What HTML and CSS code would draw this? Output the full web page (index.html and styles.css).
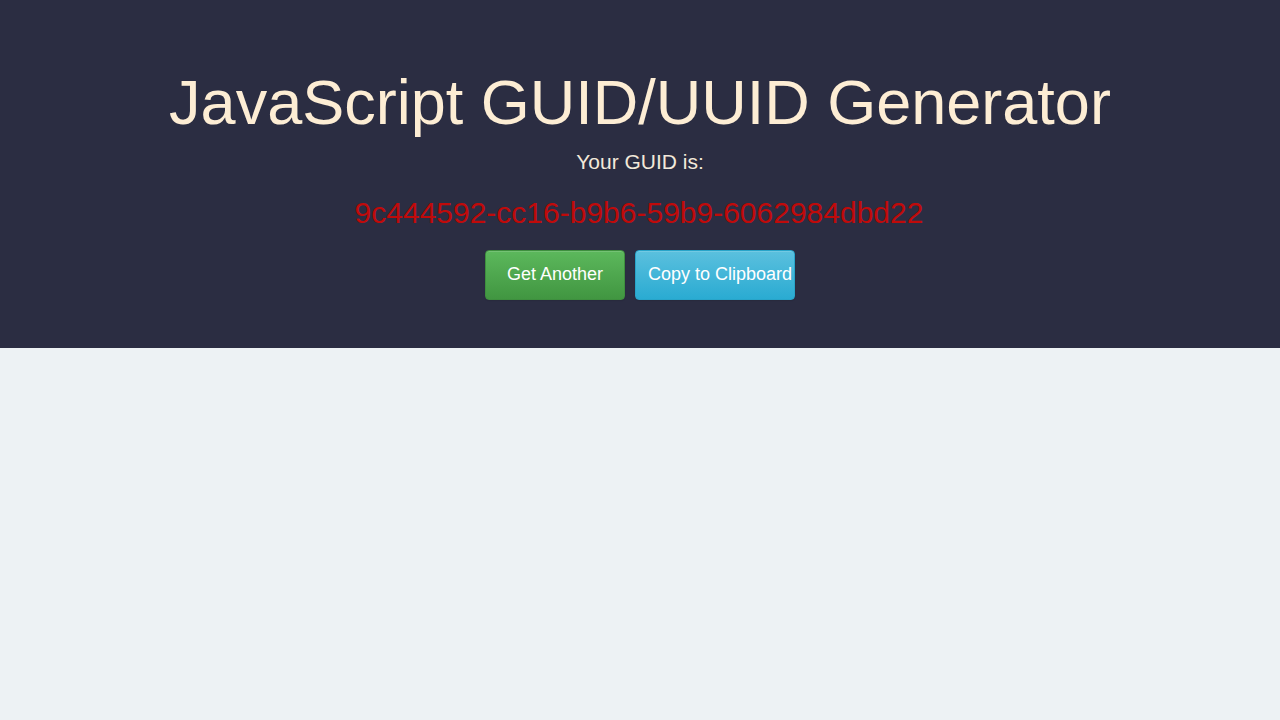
FILE: index.html
```html
<!DOCTYPE html>
<html lang="en">
<head>
    <meta charset="UTF-8">
    <meta name="viewport" content="width=device-width, initial-scale=1.0">
    <title>JavaScript GUID/UUID Generator</title>
    <link rel="stylesheet" href="styles.css">
</head>
<body>
    <div class="jumbotron">
        <h1 class="title">JavaScript GUID/UUID Generator</h1>
        <p class="lead">Your GUID is:</p>
        <h2 id="guid" class="guid">9c444592-cc16-b9b6-59b9-6062984dbd22</h2>
        <div class="actions">
            <button class="btn btn-success">Get Another</button>
            <button class="btn btn-info">Copy to Clipboard</button>
        </div>
    </div>
</body>
</html>
```

FILE: styles.css
```css
:root {
    --dark: #2b2d42;
    --light: #edf2f4;
    --cream: #fdedd4;
    --red: #c00a0a;
}

* {
    box-sizing: border-box;
}

body {
    margin: 0;
    font-family: "Liberation Sans", Arial, sans-serif;
    background: var(--light);
}

.jumbotron {
    background: var(--dark);
    padding: 48px 0;
    text-align: center;
}

.title {
    margin: 20px 0 10px;
    font-size: 63px;
    font-weight: 400;
    line-height: 1.1;
    color: var(--cream);
}

.lead {
    margin: 0 0 19px;
    font-size: 21px;
    line-height: 30px;
    color: #f3e9da;
}

.guid {
    margin: 0 0 21px;
    font-size: 30px;
    font-weight: 400;
    line-height: 33px;
    color: var(--red);
    transform: translateX(-1px);
}

.actions {
    display: flex;
    justify-content: center;
    gap: 10px;
}

.btn {
    height: 50px;
    padding: 0 0 2px;
    border-radius: 4px;
    font-family: inherit;
    font-size: 18px;
    color: #fff;
    cursor: pointer;
    white-space: nowrap;
    overflow: hidden;
    box-shadow: inset 0 1px 0 rgba(255, 255, 255, 0.15), 0 1px 1px rgba(0, 0, 0, 0.075);
}

.btn-success {
    width: 140px;
    background: linear-gradient(to bottom, #5cb85c, #419641);
    border: 1px solid #3e8f3e;
}

.btn-info {
    width: 160px;
    padding-left: 12px;
    text-align: left;
    background: linear-gradient(to bottom, #5bc0de, #2aabd2);
    border: 1px solid #28a4c9;
}
```
